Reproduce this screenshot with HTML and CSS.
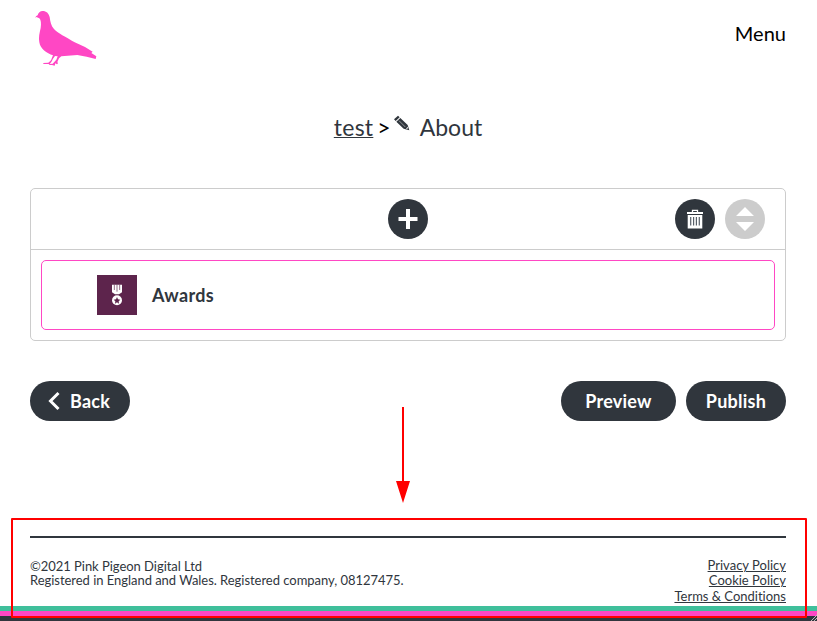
FILE: index.html
```html
<!DOCTYPE html>
<html lang="en">
<head>
<meta charset="utf-8">
<title>About</title>
<link rel="stylesheet" href="styles.css">
</head>
<body>
<div class="page">
  <header class="header">
    <svg class="logo" viewBox="0 0 240 225" aria-label="Pink Pigeon">
      <path fill="#ff47c4" d="M30 53 34 48 38 46C40 38 45 33 53 33C64 33 71 40 74 51C76 66 78 77 87 87C97 99 123 111 149 127L180 141 203 155 199 159 214 169 212 177 185 170 157 165 109 169 102 175 97 186 99 190 96 193 91 190 89 197 81 195 71 195 74 192 83 191 94 179 98 169 90 168 84 176 79 186 74 192 56 192 54 189 70 188 78 181 84 166C65 160 46 147 43 127C40 112 44 98 47 84C49 71 48 60 43 55L34 51Z"/>
    </svg>
    <a class="menu">Menu</a>
  </header>
  <h1 class="crumbs">
    <a class="parent">test</a><span class="sep">&gt;</span>
    <svg class="pencil" viewBox="0 0 48 48"><path fill="#30363d" d="M0 13 12 2 17 7 5 18ZM7 20 19 9 41 30 46 46 29 41Z"/><path stroke="#fff" stroke-width="1.4" d="M15 17 34 36"/><path fill="#fff" d="m36 41 5-6 1 4-3 3Z"/></svg>
    <span class="current">About</span>
  </h1>
  <main class="panel">
    <div class="toolbar">
      <button class="round add"><svg viewBox="0 0 40 40"><path fill="#fff" d="M18 10h4v8h7.500v4h-7.500v8h-4v-8h-7.500v-4h7.500Z"/></svg></button>
      <button class="round"><svg viewBox="0 0 40 40"><path fill="none" stroke="#fff" stroke-width="1.300" d="M17.500 13v-1.600h5V13"/><path fill="#fff" d="M12 13h16v2H12ZM12.700 16h14.600v13.500H12.700Z"/><path stroke="#59616a" stroke-width="1.200" d="M15.700 18v8.500M18.600 18v8.500M21.400 18v8.500M24.300 18v8.500"/></svg></button>
      <button class="round off"><svg viewBox="0 0 40 40"><path fill="#fff" d="m20 8 9 9H11ZM11 23h18l-9 9Z"/></svg></button>
    </div>
    <div class="item">
      <svg class="medal" viewBox="0 0 120 120"><path fill="#fff" d="M45 29h30v23l-9 6H54l-9-6Z"/><path stroke="#5d244c" stroke-width="2" d="M52 29v16M60 29v21M68 29v16"/><circle cx="60" cy="76" r="15" fill="#fff"/><path fill="#5d244c" d="m60 66 3 7 7 1-5 5 1 7-6-4-6 4 1-7-5-5 7-1Z"/></svg>
      <span class="name">Awards</span>
    </div>
  </main>
  <div class="actions">
    <button class="btn back"><svg viewBox="0 0 12 20"><path fill="none" stroke="#fff" stroke-width="3" d="m10.500 2-8 8 8 8"/></svg>Back</button>
    <button class="btn preview">Preview</button>
    <button class="btn publish">Publish</button>
  </div>
  <footer class="footer">
    <p class="legal">©2021 Pink Pigeon Digital Ltd<br>Registered in England and Wales. Registered company, 08127475.</p>
    <nav class="links"><a>Privacy Policy</a><a>Cookie Policy</a><a>Terms &amp; Conditions</a></nav>
  </footer>
</div>
<div class="stripes"></div>
<svg class="arrow" viewBox="0 0 14 96"><path fill="#f00" d="M6 0h2v74h6L7 96 0 74h6Z"/></svg>
<div class="highlight"></div>
<svg class="grip" viewBox="0 0 6 6"><path stroke="#bbb" d="M0 6 6 0M3 6l3-3"/></svg>
</body>
</html>
```
FILE: styles.css
```css
* { box-sizing: border-box; }
body {
  margin: 0;
  height: 621px;
  position: relative;
  overflow: hidden;
  display: flex;
  flex-direction: column;
  background: #fff;
  color: #30363d;
  font-family: Lato, sans-serif;
  font-variant-ligatures: none;
}
.page { height: 606px; padding: 0 31px 0 30px; }
.header { height: 75px; display: flex; justify-content: space-between; }
.logo { width: 80px; height: 75px; margin-left: -5px; }
.menu { color: #000; font-size: 20px; line-height: 24px; margin-top: 21px; }
.crumbs {
  display: flex;
  justify-content: center;
  height: 30px;
  margin: 37px 0 0;
  font-size: 23px;
  line-height: 30px;
  font-weight: 400;
}
.parent, .links a { text-decoration: underline; text-decoration-thickness: 1px; }
.parent { letter-spacing: 0.25px; }
.sep { color: #000; margin-left: 4px; }
.pencil { width: 16px; height: 16px; margin: 3px 10px 0 3px; }
.panel {
  height: 153px;
  margin-top: 46px;
  border: 1px solid #ccc;
  border-radius: 5px;
}
.toolbar {
  display: grid;
  grid-template-columns: 337px 40px 247px 40px 40px;
  height: 61px;
  padding: 10px 20px 0;
  border-bottom: 1px solid #ccc;
}
.round {
  width: 40px;
  height: 40px;
  padding: 0;
  border: 0;
  border-radius: 50%;
  background: #30363d;
}
.round svg { display: block; width: 40px; height: 40px; }
.add { grid-column: 2; }
.add + .round { grid-column: 4; }
.off { background: #ccc; grid-column: 5; margin-left: 10px; }
.item {
  display: flex;
  align-items: center;
  height: 70px;
  margin: 10px;
  padding-left: 55px;
  border: 1px solid #ff47c4;
  border-radius: 5px;
  font-size: 18px;
  font-weight: 700;
}
.name { letter-spacing: 0.35px; }
.medal { width: 40px; height: 40px; margin-right: 15px; background: #5d244c; }
.actions { display: flex; margin-top: 40px; gap: 10px; }
.btn {
  display: flex;
  align-items: center;
  justify-content: center;
  height: 40px;
  padding: 0;
  border: 0;
  border-radius: 20px;
  background: #30363d;
  color: #fff;
  font: 700 18px Lato, sans-serif;
  letter-spacing: 0.25px;
}
.back { width: 100px; margin-right: auto; padding-right: 2px; }
.back svg { width: 12px; height: 20px; margin-right: 10px; }
.preview { width: 115px; }
.publish { width: 100px; }
.footer {
  display: flex;
  justify-content: space-between;
  margin-top: 115px;
  padding-top: 20px;
  border-top: 2px solid #30363d;
  font-size: 13px;
}
.legal { margin: 1px 0 0; line-height: 14px; letter-spacing: -0.035px; }
.links { display: flex; flex-direction: column; align-items: flex-end; line-height: 15.3px; }
.stripes {
  height: 15px;
  background: linear-gradient(#3fbf9b 5px, #ff47c4 5px 10px, #30363d 10px);
}
.arrow { position: absolute; left: 396px; top: 407px; width: 14px; height: 96px; }
.highlight {
  position: absolute;
  left: 11px;
  top: 518px;
  width: 796px;
  height: 100px;
  border: 2px solid #f00;
  border-radius: 1px;
}
.grip { position: absolute; right: 0; bottom: 0; width: 6px; height: 6px; }
```
